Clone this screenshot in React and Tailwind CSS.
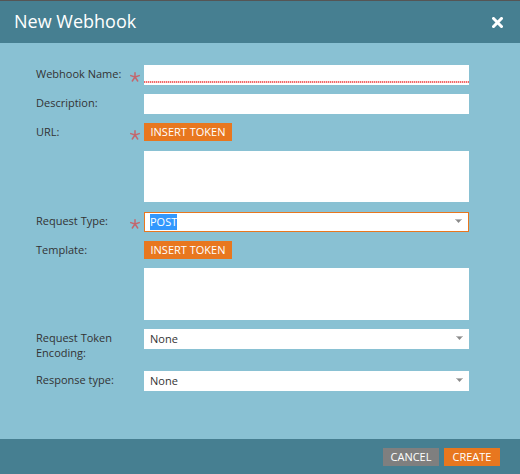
import React from 'react'

const font = { fontFamily: '"Open Sans", "Liberation Sans", sans-serif' }

function Star() {
  return (
    <svg width="10" height="10" viewBox="0 0 10 10" className="mt-[7px] ml-[-2px]">
      <g stroke="#c5666d" strokeWidth="1.5" strokeLinecap="round">
        <line x1="5" y1="5" x2="5" y2="0.8" />
        <line x1="5" y1="5" x2="0.8" y2="3.6" />
        <line x1="5" y1="5" x2="9.2" y2="3.6" />
        <line x1="5" y1="5" x2="2.3" y2="9" />
        <line x1="5" y1="5" x2="7.7" y2="9" />
      </g>
    </svg>
  )
}

function Arrow({ top = 'top-[7px]' }) {
  return (
    <svg width="7" height="4" viewBox="0 0 7 4" className={'absolute right-[6px] ' + top}>
      <path d="M0 0H7L3.5 4Z" fill="#8a8a8a" />
      <path d="M0 0H7V0.8H0Z" fill="#c4c4c4" />
    </svg>
  )
}

function Row({ label, required, children, className = '' }) {
  return (
    <div className={'flex items-start ' + className}>
      <div className="w-[96px] pt-[1px] text-[11px] leading-[15px] text-[#333]">{label}</div>
      <div className="w-[12px] h-[18px]">{required && <Star />}</div>
      <div className="w-[325px]">{children}</div>
    </div>
  )
}

function InsertToken() {
  return (
    <button className="h-[18px] w-[88px] bg-[#e8771f] text-white text-[11px] leading-[18px] text-center">
      INSERT TOKEN
    </button>
  )
}

export default function App() {
  return (
    <div className="w-[520px] h-[474px] flex flex-col bg-[#89c1d3] border-t border-[#555]" style={font}>
      {/* header */}
      <div className="h-[42px] bg-[#467f91] flex items-center justify-between pl-[14px] pr-[17px]">
        <span className="text-white text-[18px] leading-none pb-[2px]">New Webhook</span>
        <svg width="11" height="11" viewBox="0 0 11 11">
          <path d="M1.5 1.5L9.5 9.5M9.5 1.5L1.5 9.5" stroke="#fff" strokeWidth="3" strokeLinecap="square" />
        </svg>
      </div>

      {/* form */}
      <div className="flex-1 pl-[36px] pt-[22px]">
        <Row label="Webhook Name:" required>
          <div className="relative h-[20px] bg-white">
            <div className="absolute left-0 right-0 bottom-[2px] h-[2px] bg-[repeating-linear-gradient(90deg,#f06a6a_0_1px,#ffc9c9_1px_2px)]" />
          </div>
        </Row>
        <Row label="Description:" className="mt-[9px]">
          <div className="h-[20px] bg-white" />
        </Row>
        <Row label="URL:" required className="mt-[9px]">
          <div className="flex flex-col">
            <InsertToken />
            <div className="mt-[10px] h-[51px] bg-white" />
          </div>
        </Row>
        <Row label="Request Type:" required className="mt-[10px]">
          <div className="relative h-[20px] bg-white border border-[#e8771f] flex items-center pl-[5px]">
            <span className="bg-[#3297fd] text-white text-[11px] leading-[16px]">POST</span>
            <Arrow top="top-[6px]" />
          </div>
        </Row>
        <Row label="Template:" className="mt-[9px]">
          <div className="flex flex-col">
            <InsertToken />
            <div className="mt-[9px] h-[52px] bg-white" />
          </div>
        </Row>
        <Row label={<>Request Token<br />Encoding:</>} className="mt-[9px]">
          <div className="relative h-[20px] bg-white flex items-center pl-[6px] text-[11px] text-[#333]">
            None
            <Arrow />
          </div>
        </Row>
        <Row label="Response type:" className="mt-[11px]">
          <div className="relative h-[20px] bg-white flex items-center pl-[6px] text-[11px] text-[#333]">
            None
            <Arrow />
          </div>
        </Row>
      </div>

      {/* footer */}
      <div className="h-[35px] bg-[#467f91] flex items-start justify-end gap-[5px] pt-[9px] pr-[20px]">
        <button className="h-[18px] w-[56px] bg-[#7f7f7f] text-white text-[11px] leading-[18px]">CANCEL</button>
        <button className="h-[18px] w-[56px] bg-[#e8771f] text-white text-[11px] leading-[18px]">CREATE</button>
      </div>
    </div>
  )
}
